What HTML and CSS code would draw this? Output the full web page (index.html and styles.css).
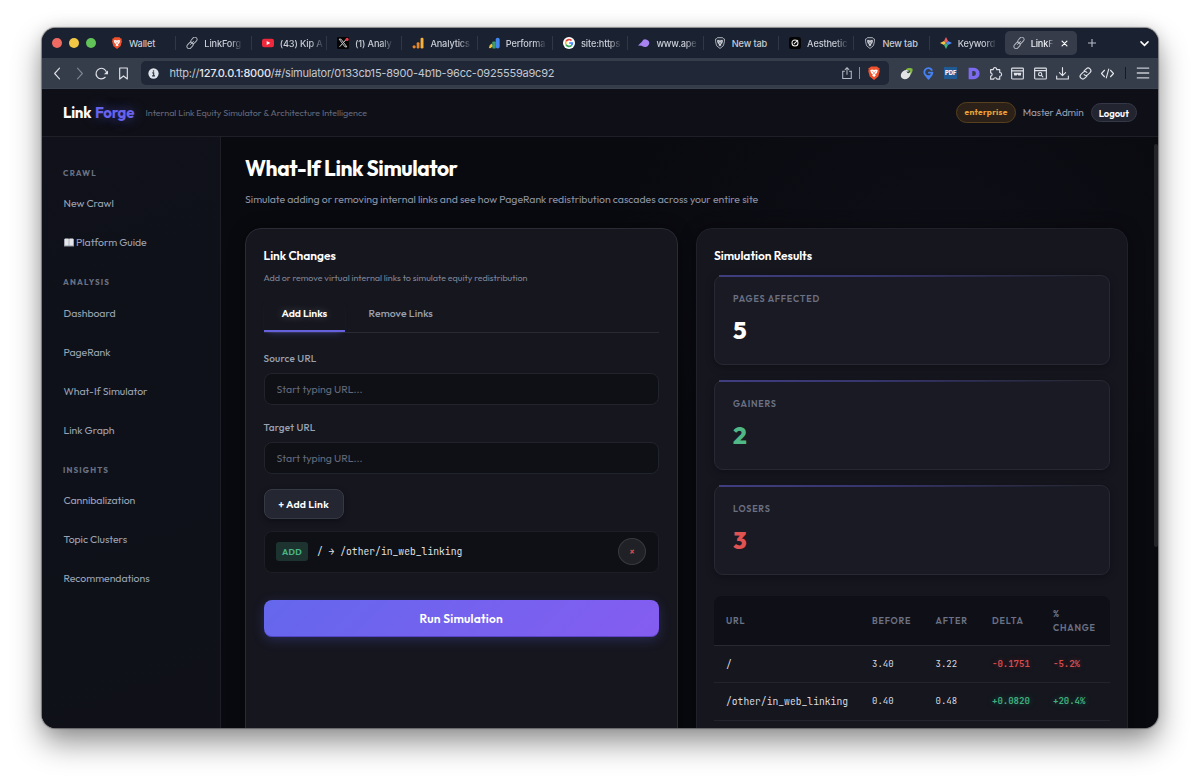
FILE: index.html
```html
<!DOCTYPE html>
<html lang="en">
<head>
    <meta charset="UTF-8">
    <meta name="viewport" content="width=device-width, initial-scale=1.0">
    <title>Link Forge</title>
    <link rel="stylesheet" href="styles.css">
</head>
<body>
    <!-- shared icon shapes -->
    <svg class="sprite" aria-hidden="true">
        <symbol id="i-chain" viewBox="0 0 14 14">
            <g fill="none" stroke="#b4b8c1" stroke-width="1.1" stroke-linecap="round">
                <rect x="5" y="1.4" width="8.4" height="5.2" rx="2.6" transform="rotate(-48 9.2 4)"/>
                <rect x="0.6" y="7.2" width="8.4" height="5.2" rx="2.6" transform="rotate(-48 4.8 9.8)"/>
                <path d="M5.2 8.8 8.800 5"/>
            </g>
        </symbol>
        <symbol id="i-brave" viewBox="0 0 14 14">
            <path fill="#f0522d" d="M4 .4h6l1.300 1.400 1.300.1-.3 1.800.5 1.300-1.500 5.400L7 13.900l-4.300-3.500L1.200 5l.5-1.300-.3-1.800 1.300-.1z"/>
            <path fill="#fff" d="M3.200 4.200 5 3.600l2 .5 2-.5 1.800.6-.9 2.700L8 8.700l.9.800L7 10.900 5.100 9.500 6 8.700 4.100 6.900z"/>
            <path fill="#f0522d" d="m4.900 5.300 1.300.3-.3.7zM9.100 5.300l-1.300.3.3.7zM6.600 6h.8l.3 1.500-.7.4-.7-.4z"/>
        </symbol>
        <symbol id="i-shield" viewBox="0 0 14 14">
            <path fill="#2c3340" stroke="#b4b9c3" stroke-width="1" d="M4 .7h6l1.300 1.500.9.1.1 2.700L11 10.200 7 13.400l-4-3.200L1.700 5l.1-2.700.9-.1z"/>
            <path fill="#d3d6dd" d="M3.400 4.200 5 3.600l2 .5 2-.5 1.600.6-.9 2.700L8 8.700l.7.700L7 10.700 5.300 9.400 6 8.700 4.300 6.900z"/>
            <path fill="#2c3340" d="m4.900 5.300 1.300.3-.3.7zM9.100 5.300l-1.300.3.3.7zM6.600 6h.8l.3 1.500-.7.4-.7-.4z"/>
        </symbol>
    </svg>

    <div class="window">
        <div class="tab-strip">
            <div class="lights">
                <span class="light red"></span>
                <span class="light yellow"></span>
                <span class="light green"></span>
            </div>
            <div class="tab"><svg class="fav"><use href="#i-brave"/></svg><span class="tab-text">Wallet</span></div>
            <div class="tab"><svg class="fav"><use href="#i-chain"/></svg><span class="tab-text fade">LinkForg</span></div>
            <div class="tab">
                <svg class="fav" viewBox="0 0 14 14"><rect x="0" y="2" width="14" height="10" rx="2.600" fill="#f0283c"/><path d="M5.500 4.700v4.600L9.600 7z" fill="#fff"/></svg>
                <span class="tab-text fade">(43) Kip A</span>
            </div>
            <div class="tab">
                <svg class="fav" viewBox="0 0 14 14"><rect width="14" height="14" rx="1.500" fill="#050505"/><path d="M2.500 2.500h2.200l6.800 9H9.300z" fill="none" stroke="#e4e4e4"/><path d="M11 2.500 7.800 6.100M6.200 8 3 11.500" stroke="#e4e4e4" stroke-width="1.100"/><circle cx="11.800" cy="2.800" r="1.800" fill="#e23c4c"/></svg>
                <span class="tab-text fade">(1) Analy</span>
            </div>
            <div class="tab">
                <svg class="fav" viewBox="0 0 14 14"><circle cx="2.500" cy="11.500" r="1.900" fill="#e8862a"/><rect x="5.500" y="6" width="3.200" height="7.400" rx="1.400" fill="#e8862a"/><rect x="10" y=".8" width="3.400" height="12.600" rx="1.500" fill="#f7b23c"/></svg>
                <span class="tab-text fade">Analytics</span>
            </div>
            <div class="tab">
                <svg class="fav" viewBox="0 0 14 14"><path d="M1 12.800 2 9.500l2.200-2 2 3-3.400 2.600z" fill="#f6bd3a"/><rect x="5" y="5.200" width="4" height="8.200" rx="1" fill="#3f9a68"/><rect x="9" y=".8" width="4.600" height="12.600" rx="2.200" fill="#4286ef"/></svg>
                <span class="tab-text fade">Performa</span>
            </div>
            <div class="tab">
                <svg class="fav" viewBox="0 0 14 14"><circle cx="7" cy="7" r="7" fill="#fff"/><g fill="none" stroke-width="1.900"><path d="M9.900 4.200A4 4 0 0 0 3.500 5.100" stroke="#ea4335"/><path d="M3.500 5.100a4 4 0 0 0 0 3.800" stroke="#fbbc05"/><path d="M3.500 8.900a4 4 0 0 0 6.100 1.100" stroke="#34a853"/><path d="M9.600 10A4 4 0 0 0 11 7H7.200" stroke="#4285f4"/></g></svg>
                <span class="tab-text fade">site:https</span>
            </div>
            <div class="tab">
                <svg class="fav" viewBox="0 0 14 14"><path d="M0 9.800 4.600 5.400A4.400 4.400 0 1 1 7 11.300c-1 0-1.800-.6-2.600-1.200z" fill="#a783f2"/></svg>
                <span class="tab-text fade">www.ape</span>
            </div>
            <div class="tab"><svg class="fav"><use href="#i-shield"/></svg><span class="tab-text">New tab</span></div>
            <div class="tab">
                <svg class="fav" viewBox="0 0 14 14"><rect width="14" height="14" rx="3" fill="#050505"/><circle cx="7" cy="7" r="3.500" fill="none" stroke="#eee" stroke-width="1.200"/><path d="m5.600 8.400 4.900-4.900" stroke="#eee" stroke-width="1.200"/></svg>
                <span class="tab-text fade">Aesthetic</span>
            </div>
            <div class="tab"><svg class="fav"><use href="#i-shield"/></svg><span class="tab-text">New tab</span></div>
            <div class="tab last">
                <svg class="fav" viewBox="0 0 14 14"><path d="M7 0 9.300 4.700 7 7 4.700 4.700z" fill="#ee5b62"/><path d="M0 7l4.700-2.300L7 7 4.700 9.300z" fill="#f3c343"/><path d="M7 14 4.700 9.300 7 7l2.300 2.300z" fill="#43b279"/><path d="M14 7 9.300 9.300 7 7l2.300-2.300z" fill="#4c8df5"/></svg>
                <span class="tab-text fade">Keyword</span>
            </div>
            <div class="tab active">
                <svg class="fav"><use href="#i-chain"/></svg>
                <span class="tab-text fade">LinkF</span>
                <svg class="tab-close" viewBox="0 0 8 8"><path d="m1.200 1.200 5.600 5.600M6.800 1.200 1.200 6.800"/></svg>
            </div>
            <svg class="new-tab" viewBox="0 0 10 10"><path d="M5 1v8M1 5h8"/></svg>
            <svg class="tab-list" viewBox="0 0 10 10"><path d="m1.800 3.500 3.200 3.200 3.200-3.200"/></svg>
        </div>

        <div class="toolbar">
            <div class="nav-icons">
                <svg class="ico" viewBox="0 0 16 16"><path d="M10.500 1.500 4.500 8l6 6.500"/></svg>
                <svg class="ico dim" viewBox="0 0 16 16"><path d="M5.500 1.500 11.500 8l-6 6.500"/></svg>
                <svg class="ico" viewBox="0 0 16 16"><path d="M12.500 12.600A6.500 6.500 0 1 1 14.200 7"/><path class="solid" d="M16 4.300v4.700h-5z"/></svg>
                <svg class="ico" viewBox="0 0 16 16"><path d="M3.300 1.200h9.400v13.600L8 11l-4.700 3.800z"/></svg>
            </div>
            <div class="url-bar">
                <svg class="info" viewBox="0 0 12 12"><circle cx="6" cy="6" r="5.600" fill="#dfe3ea"/><path d="M4.700 5.300H6.200v3.200M4.500 8.600h3.100" stroke="#253043" stroke-width="1.200" fill="none"/><circle cx="6" cy="3.300" r=".8" fill="#253043"/></svg>
                <span class="url">http://<b>127.0.0.1:8000</b>/#/simulator/0133cb15-8900-4b1b-96cc-0925559a9c92</span>
                <svg class="share" viewBox="0 0 14 14"><path d="M4.500 5H2v8.300h10V5H9.500M7 9V1M4.500 3.300 7 .8l2.500 2.500"/></svg>
                <span class="url-sep"></span>
                <svg class="brave"><use href="#i-brave"/></svg>
            </div>
            <div class="extensions">
                <svg class="ico" viewBox="0 0 16 16"><g stroke="none"><path d="M7 3c3-2.500 7-2 8.500-.5.300 3-1 5.500-3 7z" fill="#80b83e"/><ellipse cx="6.800" cy="9.200" rx="6.400" ry="5.300" transform="rotate(-38 7 9)" fill="#e1e3e4"/><circle cx="10.300" cy="5.600" r="2" fill="#34483a"/><circle cx="9.700" cy="5" r=".9" fill="#fff"/></g></svg>
                <svg class="ico" viewBox="0 0 16 16"><path d="M12 3.600A5 5 0 1 0 12.800 7H8.500M4 9.500l4 5 4-5" stroke="#4681f2" stroke-width="2.300"/></svg>
                <span class="pdf">PDF</span>
                <svg class="ico" viewBox="0 0 16 16"><path d="M2 1h6.500a7 7 0 0 1 0 14H2zM6.500 5v6H8a3 3 0 0 0 0-6z" fill="#7c6af0" fill-rule="evenodd" stroke="none"/></svg>
                <svg class="ico" viewBox="0 0 16 16"><path d="M2 3.200h3.300C4.700 0 10 0 9.400 3.200H13.200v3.600c3.100 0 3.100 4.600 0 4.600v3.600H9.800c0-2.400-4.100-2.400-4.100 0H2v-3.700c2.400 0 2.400-4.100 0-4.100z"/></svg>
                <svg class="ico" viewBox="0 0 16 16"><rect x=".8" y="1.300" width="14.400" height="13.400" rx="1"/><path d="M.8 4.700h14.400"/><path class="solid" d="M3.300 7h9.400l-.6 3.500H9L8 8.800l-1 1.700H3.900z"/></svg>
                <svg class="ico" viewBox="0 0 16 16"><rect x=".8" y="1.300" width="14.400" height="13.400" rx="1"/><path d="M.8 4.400h14.400"/><circle cx="7.600" cy="8.800" r="2"/><path d="m9.200 10.400 1.700 1.700"/></svg>
                <svg class="ico" viewBox="0 0 16 16"><path d="M8 .8v9.600M4.200 6.900 8 10.700l3.800-3.800M.8 11.200v3.500h14.400v-3.500"/></svg>
                <svg class="ico" viewBox="0 0 16 16"><path d="m6.300 4.800 2.600-2.600a3.300 3.300 0 0 1 4.700 4.700L11 9.500a3.300 3.300 0 0 1-4.700 0M9.700 11.200l-2.600 2.600a3.300 3.300 0 0 1-4.700-4.700L5 6.500a3.300 3.300 0 0 1 4.700 0"/></svg>
                <svg class="ico" viewBox="0 0 16 16"><path d="M4.300 4 .6 8l3.700 4M11.700 4l3.700 4-3.700 4M9.500 2.500l-3 11"/></svg>
                <span class="tool-sep"></span>
                <svg class="menu" viewBox="0 0 14 14"><path d="M.8 2.200h12.400M.8 7h12.400M.8 11.800h12.400"/></svg>
            </div>
        </div>

        <div class="app">
            <header class="app-header">
                <div class="logo">Link <span class="logo-accent">Forge</span></div>
                <div class="tagline">Internal Link Equity Simulator &amp; Architecture Intelligence</div>
                <div class="account">
                    <span class="plan-badge">enterprise</span>
                    <span class="user-name">Master Admin</span>
                    <button class="logout">Logout</button>
                </div>
            </header>

            <div class="layout">
                <nav class="sidebar">
                    <div class="nav-label">CRAWL</div>
                    <a class="nav-item">New Crawl</a>
                    <a class="nav-item">
                        <svg class="book" viewBox="0 0 10 9"><path d="M0 1h10v7.500H0z" fill="#8f949e"/><path d="M.8.500h3.900v7H.8zM5.300.5h3.900v7H5.300z" fill="#e3e5ea"/></svg>Platform Guide
                    </a>
                    <div class="nav-label">ANALYSIS</div>
                    <a class="nav-item">Dashboard</a>
                    <a class="nav-item">PageRank</a>
                    <a class="nav-item">What-If Simulator</a>
                    <a class="nav-item">Link Graph</a>
                    <div class="nav-label">INSIGHTS</div>
                    <a class="nav-item">Cannibalization</a>
                    <a class="nav-item">Topic Clusters</a>
                    <a class="nav-item">Recommendations</a>
                </nav>

                <main class="content">
                    <h1>What-If Link Simulator</h1>
                    <p class="subtitle">Simulate adding or removing internal links and see how PageRank redistribution cascades across your entire site</p>

                    <div class="columns">
                        <section class="card changes">
                            <h2>Link Changes</h2>
                            <p class="card-desc">Add or remove virtual internal links to simulate equity redistribution</p>
                            <div class="mode-tabs">
                                <button class="mode-tab selected">Add Links</button>
                                <button class="mode-tab">Remove Links</button>
                            </div>
                            <label class="field-label">Source URL</label>
                            <input class="field" type="text" placeholder="Start typing URL...">
                            <label class="field-label">Target URL</label>
                            <input class="field" type="text" placeholder="Start typing URL...">
                            <button class="add-link">+ Add Link</button>
                            <div class="change-row">
                                <span class="add-badge">ADD</span>
                                <span class="change-path">/ → /other/in_web_linking</span>
                                <button class="remove">×</button>
                            </div>
                            <button class="run">Run Simulation</button>
                        </section>

                        <section class="card results">
                            <h2>Simulation Results</h2>
                            <div class="stat">
                                <div class="stat-label">PAGES AFFECTED</div>
                                <div class="stat-value">5</div>
                            </div>
                            <div class="stat">
                                <div class="stat-label">GAINERS</div>
                                <div class="stat-value gain">2</div>
                            </div>
                            <div class="stat">
                                <div class="stat-label">LOSERS</div>
                                <div class="stat-value loss">3</div>
                            </div>
                            <table class="results-table">
                                <thead>
                                    <tr><th class="c-url">URL</th><th class="c-before">BEFORE</th><th class="c-after">AFTER</th><th class="c-delta">DELTA</th><th>% CHANGE</th></tr>
                                </thead>
                                <tbody>
                                    <tr><td class="path">/</td><td>3.40</td><td>3.22</td><td class="neg">-0.1751</td><td class="neg">-5.2%</td></tr>
                                    <tr><td class="path">/other/in_web_linking</td><td>0.40</td><td>0.48</td><td class="pos">+0.0820</td><td class="pos">+20.4%</td></tr>
                                </tbody>
                            </table>
                        </section>
                    </div>
                    <div class="scrollbar"></div>
                </main>
            </div>
        </div>
    </div>
</body>
</html>
```
FILE: styles.css
```css
* {
    margin: 0;
    padding: 0;
    box-sizing: border-box;
}

body {
    width: 1200px;
    height: 784px;
    padding: 28px 42px 56px;
    background: #ffffff;
    overflow: hidden;
    font-family: Outfit, Lato, sans-serif;
}

button,
input {
    font-family: inherit;
    border: none;
    background: none;
}

.sprite {
    position: absolute;
    width: 0;
    height: 0;
}

.window {
    width: 1116px;
    height: 700px;
    display: flex;
    flex-direction: column;
    border-radius: 14px;
    overflow: hidden;
    background: #090a0f;
    box-shadow: 0 0 1px 0.5px rgba(60, 60, 65, 0.55), 0 15px 30px rgba(0, 0, 0, 0.42), 0 0 16px rgba(0, 0, 0, 0.12);
}

/* browser tabs */
.tab-strip {
    height: 30px;
    flex: none;
    display: flex;
    align-items: center;
    background: #1a2130;
    font-family: Inter, sans-serif;
    color: #c9cdd6;
}

.lights {
    width: 59px;
    flex: none;
    display: flex;
    gap: 6.5px;
    padding-left: 9.5px;
}

.light {
    width: 10.5px;
    height: 10.5px;
    border-radius: 50%;
}

.red { background: #ee6a62; }
.yellow { background: #f3c745; }
.green { background: #61c358; }

.tab {
    width: 75.35px;
    height: 14px;
    flex: none;
    display: flex;
    align-items: center;
    gap: 6px;
    padding: 0 2px 0 10px;
    border-right: 1px solid #303848;
}

.tab.last {
    border-right-color: transparent;
}

.fav {
    width: 12px;
    height: 12px;
    flex: none;
}

.tab-text {
    white-space: nowrap;
    font-size: 9.2px;
    font-weight: 500;
    letter-spacing: -0.15px;
}

.tab-text.fade {
    -webkit-mask-image: linear-gradient(90deg, #000 72%, transparent 104%);
    mask-image: linear-gradient(90deg, #000 72%, transparent 104%);
}

.tab.active {
    width: 72px;
    height: 23.5px;
    margin-left: -0.5px;
    padding: 0 9px 0 8px;
    border: none;
    border-radius: 5px;
    background: #363c4a;
    color: #eceef2;
}

.tab-close {
    width: 7px;
    height: 7px;
    flex: none;
    margin-left: auto;
    fill: none;
    stroke: #ffffff;
    stroke-width: 1.3;
    stroke-linecap: round;
}

.new-tab {
    width: 10px;
    height: 10px;
    margin-left: 10.5px;
    fill: none;
    stroke: #b8bdc7;
    stroke-width: 1.1;
}

.tab-list {
    width: 11px;
    height: 11px;
    margin-left: auto;
    margin-right: 8px;
    fill: none;
    stroke: #ffffff;
    stroke-width: 1.4;
    stroke-linecap: round;
}

/* browser toolbar */
.toolbar {
    height: 31px;
    flex: none;
    display: flex;
    align-items: center;
    background: #353c4a;
    border-bottom: 1px solid #3c4351;
}

.nav-icons {
    width: 99px;
    display: flex;
    gap: 9.3px;
    padding-left: 8.5px;
}

.ico {
    width: 13px;
    height: 13px;
    flex: none;
    fill: none;
    stroke: #dfe2e8;
    stroke-width: 1.4;
    stroke-linecap: round;
    stroke-linejoin: round;
    overflow: visible;
}

.ico.dim {
    stroke: #7d8492;
}

.solid {
    fill: #dfe2e8;
    stroke: none;
}

.url-bar {
    width: 748px;
    height: 24px;
    display: flex;
    align-items: center;
    padding: 0 8px 0 7px;
    border-radius: 5px;
    background: #202737;
}

.info {
    width: 11px;
    height: 11px;
}

.url {
    flex: 1;
    margin-left: 10.5px;
    font-family: Inter, sans-serif;
    font-size: 11px;
    letter-spacing: -0.21px;
    color: #c3c8d2;
}

.url b {
    font-weight: 500;
    color: #e6e8ed;
}

.share {
    width: 12px;
    height: 12px;
    fill: none;
    stroke: #b5bac4;
    stroke-width: 1.2;
}

.url-sep {
    width: 1px;
    height: 12px;
    margin: 0 7px 0 6.5px;
    background: #8b919d;
}

.brave {
    width: 14px;
    height: 14px;
}

.extensions {
    flex: 1;
    display: flex;
    align-items: center;
    gap: 9.4px;
    padding-left: 10.5px;
}

.pdf {
    width: 13px;
    height: 12px;
    flex: none;
    background: #1f5a94;
    color: #ffffff;
    font-family: Inter, sans-serif;
    font-size: 5.8px;
    font-weight: 800;
    line-height: 12px;
    text-align: center;
}

.tool-sep {
    width: 1px;
    height: 12px;
    margin: 0 0.5px 0 2px;
    background: #151a26;
}

.menu {
    width: 14px;
    height: 14px;
    fill: none;
    stroke: #c5c9d1;
    stroke-width: 1.3;
}

/* application */
.app {
    flex: 1;
    min-height: 0;
    display: flex;
    flex-direction: column;
    background: radial-gradient(ellipse 330px 260px at 80% 26%, #0e0e17, #090a0f 100%);
}

.app-header {
    height: 48px;
    flex: none;
    display: flex;
    align-items: center;
    padding: 0 21px;
    background: #0f1017;
    border-bottom: 1px solid #1e1f27;
}

.logo {
    width: 82.5px;
    white-space: nowrap;
    color: #ffffff;
    font-size: 15px;
    font-weight: 700;
    letter-spacing: -0.25px;
    word-spacing: 1.2px;
}

.logo-accent {
    color: #6763ec;
    text-shadow: 0 0 12px rgba(99, 102, 241, 0.5);
}

.tagline {
    color: #64697a;
    font-size: 9px;
    letter-spacing: -0.02px;
}

.account {
    margin-left: auto;
    display: flex;
    align-items: center;
    gap: 7px;
}

.plan-badge {
    width: 59.5px;
    height: 20.5px;
    border: 1px solid #59401c;
    border-radius: 11px;
    background: #2c2118;
    color: #e9a035;
    font-size: 8.5px;
    font-weight: 700;
    line-height: 18px;
    letter-spacing: 0.25px;
    text-align: center;
}

.user-name {
    color: #959bab;
    font-size: 10px;
    letter-spacing: -0.12px;
}

.logout {
    width: 46.5px;
    height: 19.5px;
    border: 1px solid #353846;
    border-radius: 10px;
    background: #22242f;
    color: #ffffff;
    font-size: 9.5px;
    font-weight: 600;
    line-height: 16px;
}

.layout {
    flex: 1;
    min-height: 0;
    display: flex;
}

.sidebar {
    width: 179px;
    flex: none;
    padding: 16px 21px;
    border-right: 1px solid #1d1e26;
    background: linear-gradient(160deg, #10111a, #0e1119 60%, #101118);
}

.nav-label {
    height: 31px;
    padding-top: 15px;
    color: #6b7184;
    font-size: 8px;
    font-weight: 700;
    line-height: 10px;
    letter-spacing: 1.15px;
}

.nav-item {
    height: 39.15px;
    display: flex;
    align-items: center;
    padding: 0 0 0.5px 0.5px;
    color: #9aa2b3;
    font-size: 10.5px;
    font-weight: 450;
    letter-spacing: -0.05px;
}

.book {
    width: 10px;
    height: 9px;
    margin-right: 2.5px;
}

.content {
    position: relative;
    flex: 1;
    min-width: 0;
    padding: 17px 30px 0 24px;
    overflow: hidden;
}

h1 {
    color: #ffffff;
    font-size: 21px;
    font-weight: 700;
    line-height: 28px;
    letter-spacing: -0.45px;
}

.subtitle {
    margin-top: 9px;
    color: #8b91a3;
    font-size: 10.5px;
    line-height: 16px;
    letter-spacing: -0.025px;
}

.columns {
    display: grid;
    grid-template-columns: 432.5px 432.5px;
    gap: 18px;
    margin-top: 21px;
}

.card {
    height: 560px;
    padding: 18px 17.5px;
    border: 1px solid #2a2b34;
    border-radius: 16px;
    background: #15161e;
    box-shadow: 0 0 16px rgba(0, 0, 0, 0.4);
}

.results {
    border-color: #20212b;
}

h2 {
    color: #ffffff;
    font-size: 12px;
    font-weight: 600;
    line-height: 18px;
    letter-spacing: -0.03px;
}

.card-desc {
    margin-top: 6px;
    color: #7f8596;
    font-size: 9px;
    line-height: 14px;
    letter-spacing: -0.02px;
}

.mode-tabs {
    height: 36.5px;
    display: flex;
    margin-top: 11px;
    border-bottom: 1px solid #292a34;
}

.mode-tab {
    height: 36px;
    padding: 0 18px;
    border-bottom: 2px solid transparent;
    color: #99a0b0;
    font-size: 10.5px;
    font-weight: 500;
    letter-spacing: 0.1px;
    white-space: nowrap;
}

.mode-tab + .mode-tab {
    margin-left: 5.5px;
}

.mode-tab.selected {
    border-bottom-color: #6561dc;
    color: #ffffff;
    font-weight: 600;
    letter-spacing: -0.04px;
    text-shadow: 0 0 8px rgba(255, 255, 255, 0.3);
    box-shadow: 0 5px 7px -5px rgba(99, 102, 241, 0.45);
}

.field-label {
    display: block;
    margin-top: 18px;
    color: #9aa1b1;
    font-size: 10px;
    font-weight: 500;
    line-height: 16px;
    letter-spacing: 0.21px;
}

.field {
    width: 100%;
    height: 32px;
    display: block;
    margin-top: 6px;
    padding: 0 12px;
    border: 1px solid #22242b;
    border-radius: 8px;
    background: #0f1015;
    font-size: 10.5px;
}

.field + .field-label {
    margin-top: 15px;
}

.field::placeholder {
    color: #636979;
}

.add-link {
    width: 80px;
    height: 30px;
    display: block;
    margin-top: 15px;
    border: 1px solid #363843;
    border-radius: 8px;
    background: #242632;
    color: #ffffff;
    font-size: 10.5px;
    font-weight: 600;
    letter-spacing: 0.16px;
    box-shadow: 0 2px 6px rgba(0, 0, 0, 0.3);
}

.change-row {
    height: 42.5px;
    display: flex;
    align-items: center;
    margin-top: 12px;
    padding: 0 12px 0 11.5px;
    border: 1px solid #1e1f26;
    border-radius: 8px;
    background: #0f1015;
}

.add-badge {
    width: 32px;
    height: 19px;
    border-radius: 3px;
    background: #1c332f;
    color: #49b583;
    font-size: 8.5px;
    font-weight: 700;
    line-height: 19px;
    letter-spacing: 0.35px;
    text-align: center;
}

/* plain arrow, no coding ligatures */
.change-path {
    flex: 1;
    margin-left: 9px;
    color: #dfe1e6;
    font-family: "JetBrains Mono", "DejaVu Sans Mono", monospace;
    font-size: 9.7px;
}

.remove {
    width: 28px;
    height: 27px;
    border: 1px solid #383a40;
    border-radius: 50%;
    background: #202126;
    color: #d94a4d;
    font-size: 9px;
    font-weight: 600;
}

.run {
    width: 100%;
    height: 37.5px;
    display: block;
    margin-top: 26.5px;
    border-radius: 8px;
    background: linear-gradient(135deg, #6467ec, #855df0);
    color: #ffffff;
    font-size: 12px;
    font-weight: 600;
    letter-spacing: 0.2px;
    box-shadow: 0 3px 12px rgba(99, 102, 241, 0.25), inset 0 -1px 0 rgba(60, 40, 160, 0.5);
}

.stat {
    position: relative;
    height: 90px;
    margin-bottom: 15px;
    padding: 15.5px 18px;
    border: 1px solid #272832;
    border-radius: 9px;
    background: #191a23;
    box-shadow: 0 2px 8px rgba(0, 0, 0, 0.25);
}

h2 + .stat {
    margin-top: 10px;
}

/* fading highlight along the top edge of a stat */
.stat::before {
    content: "";
    position: absolute;
    top: -1px;
    left: 4px;
    right: 4px;
    height: 2px;
    background: linear-gradient(90deg, #403e80, #36356c 40%, transparent 95%);
}

.stat-label {
    color: #6b7183;
    font-size: 9px;
    font-weight: 600;
    line-height: 13px;
    letter-spacing: 0.8px;
}

.stat-value {
    margin-top: 9.5px;
    color: #ffffff;
    font-size: 24px;
    font-weight: 800;
    line-height: 32px;
}

.stat-value.gain { color: #4fb886; }
.stat-value.loss { color: #e05353; }

.results-table {
    width: 100%;
    margin-top: 21px;
    border-collapse: separate;
    border-spacing: 0;
    table-layout: fixed;
    text-align: left;
}

.results-table th {
    height: 50px;
    padding: 0 12px;
    border-bottom: 1px solid #282932;
    background: #0f1017;
    color: #6b7284;
    font-size: 9px;
    font-weight: 600;
    line-height: 14px;
    letter-spacing: 0.8px;
}

.results-table th:first-child { border-top-left-radius: 8px; }
.results-table th:last-child { border-top-right-radius: 8px; }

.c-url { width: 146px; }
.c-before { width: 63.5px; }
.c-after { width: 56.5px; }
.c-delta { width: 61px; }

.results-table td {
    height: 37.3px;
    padding: 0 12px;
    border-bottom: 1px solid #22232c;
    color: #d9dbe1;
    font-family: "JetBrains Mono", "DejaVu Sans Mono", monospace;
    font-size: 9px;
    white-space: nowrap;
}

.results-table .path {
    padding-right: 0;
    font-size: 9.7px;
}

.results-table .neg,
.results-table .pos {
    font-weight: 700;
}

.results-table .neg {
    color: #d94b4d;
    text-shadow: 0 0 6px rgba(239, 68, 68, 0.3);
}

.results-table .pos {
    color: #42ad7b;
    text-shadow: 0 0 6px rgba(16, 185, 129, 0.4);
}

/* overlay scrollbar at the window edge */
.scrollbar {
    position: absolute;
    top: 7px;
    right: 0;
    width: 4px;
    height: 403px;
    border-radius: 2px;
    background: #242529;
}
```
